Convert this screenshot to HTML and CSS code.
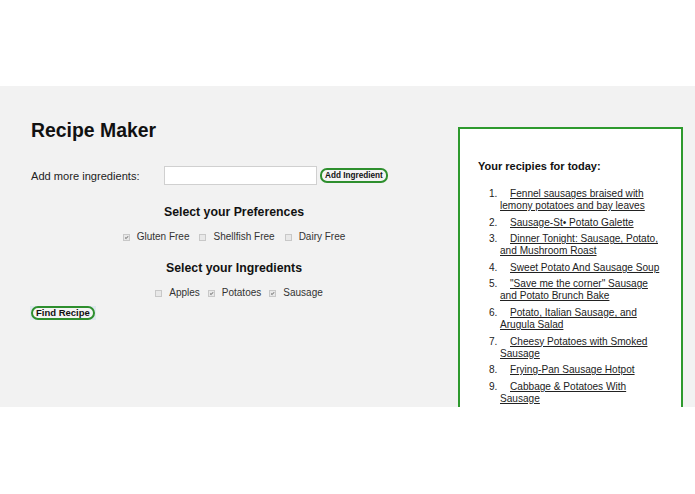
FILE: index.html
```html
<!DOCTYPE html>
<html>
<head>
<meta charset="utf-8">
<title>Recipe Maker</title>
<link rel="stylesheet" href="styles.css">
</head>
<body>
<div class="page">
  <section class="band">
    <div class="main">
      <h1 class="title">Recipe Maker</h1>
      <div class="add-row">
        <label class="add-label" for="ing">Add more ingredients:</label>
        <input class="add-input" id="ing" type="text">
        <button class="btn btn-add">Add Ingredient</button>
      </div>
      <h2 class="sub sub-pref">Select your Preferences</h2>
      <div class="checks">
        <label class="check"><span class="box on"><svg viewBox="0 0 7 7"><path d="M1.5 3.6 L3 5 L5.6 1.8" /></svg></span>Gluten Free</label>
        <label class="check"><span class="box"></span>Shellfish Free</label>
        <label class="check"><span class="box"></span>Dairy Free</label>
      </div>
      <h2 class="sub sub-ing">Select your Ingredients</h2>
      <div class="checks checks-ing">
        <label class="check"><span class="box"></span>Apples</label>
        <label class="check"><span class="box on"><svg viewBox="0 0 7 7"><path d="M1.5 3.6 L3 5 L5.6 1.8" /></svg></span>Potatoes</label>
        <label class="check"><span class="box on"><svg viewBox="0 0 7 7"><path d="M1.5 3.6 L3 5 L5.6 1.8" /></svg></span>Sausage</label>
      </div>
      <div class="find-wrap"><button class="btn btn-find">Find Recipe</button></div>
    </div>
    <aside class="recipes">
      <h3 class="rec-title">Your recipies for today:</h3>
      <ol class="rec-list">
        <li><span class="num">1.</span><a href="#">Fennel sausages braised with lemony potatoes and bay leaves</a></li>
        <li><span class="num">2.</span><a href="#">Sausage-St• Potato Galette</a></li>
        <li><span class="num">3.</span><a href="#">Dinner Tonight: Sausage, Potato, and Mushroom Roast</a></li>
        <li><span class="num">4.</span><a href="#">Sweet Potato And Sausage Soup</a></li>
        <li><span class="num">5.</span><a href="#">"Save me the corner" Sausage and Potato Brunch Bake</a></li>
        <li><span class="num">6.</span><a href="#">Potato, Italian Sausage, and Arugula Salad</a></li>
        <li><span class="num">7.</span><a href="#">Cheesy Potatoes with Smoked Sausage</a></li>
        <li><span class="num">8.</span><a href="#">Frying-Pan Sausage Hotpot</a></li>
        <li><span class="num">9.</span><a href="#">Cabbage &amp; Potatoes With Sausage</a></li>
      </ol>
    </aside>
  </section>
</div>
</body>
</html>
```

FILE: styles.css
```css
html, body {
  margin: 0;
  padding: 0;
  background: #ffffff;
}
body {
  font-family: "Liberation Sans", Arial, sans-serif;
  color: #222;
}
.page {
  padding-top: 86px;
}
.band {
  background: #f2f2f2;
  height: 321px;
  overflow: hidden;
  display: flex;
  align-items: flex-start;
}
.main {
  width: 406px;
  padding-left: 31px;
  display: flex;
  flex-direction: column;
}
.title {
  margin: 32px 0 0;
  font-size: 19.4px;
  line-height: 24px;
  font-weight: bold;
  color: #111;
}
.add-row {
  margin-top: 24px;
  display: flex;
  align-items: center;
  height: 19px;
}
.add-label {
  width: 133px;
  font-size: 11.1px;
  color: #222;
}
.add-input {
  box-sizing: border-box;
  width: 153px;
  height: 19px;
  margin: 0 3px 0 0;
  padding: 0 3px;
  border: 1px solid #d0d0d0;
  background: #fff;
  outline: none;
}
.btn {
  font-family: "Liberation Sans", Arial, sans-serif;
  font-weight: bold;
  color: #111;
  background: #f4f4f4;
  border: 2px solid #2e8f2e;
  border-radius: 7px;
  padding: 0 3px;
  margin: 0;
  cursor: pointer;
}
.btn-add {
  font-size: 8.2px;
  line-height: 11px;
  height: 15px;
}
.sub {
  margin: 0;
  text-align: center;
  font-size: 12.3px;
  line-height: 16px;
  font-weight: bold;
  color: #111;
}
.sub-pref {
  margin-top: 19px;
}
.sub-ing {
  margin-top: 16px;
}
.checks {
  margin-top: 10px;
  display: flex;
  justify-content: center;
  gap: 10px;
  font-size: 10px;
  line-height: 14px;
  color: #333;
}
.checks-ing {
  gap: 8px;
  padding-left: 10px;
}
.check {
  display: flex;
  align-items: center;
}
.box {
  box-sizing: border-box;
  width: 7px;
  height: 7px;
  margin-right: 7px;
  border: 1px solid #c8c8c8;
  background: #e8e8e8;
  display: inline-flex;
}
.box svg {
  width: 5px;
  height: 5px;
}
.box path {
  fill: none;
  stroke: #555;
  stroke-width: 1.3;
}
.find-wrap {
  margin-top: 6px;
  align-self: flex-start;
  margin-left: -1px;
  background: #dfe8ee;
  padding: 0 1px;
}
.btn-find {
  font-size: 9.5px;
  line-height: 10px;
  height: 14px;
  display: block;
}
.recipes {
  box-sizing: border-box;
  margin-top: 41px;
  margin-left: 21px;
  width: 225px;
  height: 400px;
  flex: none;
  background: #fff;
  border: 2px solid #2e9a2e;
  padding: 31px 17px 0 18px;
}
.rec-title {
  margin: 0;
  font-size: 11px;
  line-height: 13px;
  font-weight: bold;
  color: #111;
}
.rec-list {
  list-style: none;
  margin: 15px 0 0;
  padding: 0 0 0 22px;
  font-size: 10.1px;
  line-height: 12px;
  color: #222;
}
.rec-list li {
  margin-bottom: 4.6px;
}
.num {
  display: inline-block;
  width: 21px;
  margin-left: -11px;
}
.rec-list a {
  color: #222;
  text-decoration: underline;
}
```
